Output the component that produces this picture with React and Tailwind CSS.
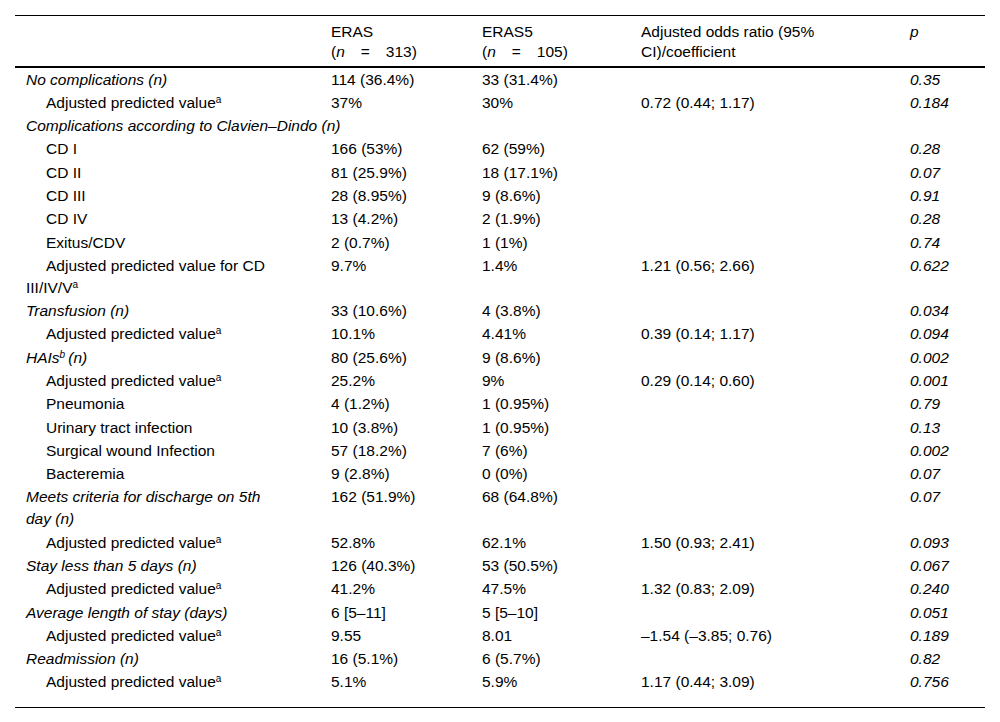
const rows = [
  { label: ['No complications (n)'], italic: true, a: '114 (36.4%)', b: '33 (31.4%)', c: '', p: '0.35' },
  { label: ['Adjusted predicted value'], sup: 'a', a: '37%', b: '30%', c: '0.72 (0.44; 1.17)', p: '0.184' },
  { section: 'Complications according to Clavien–Dindo (n)' },
  { label: ['CD I'], a: '166 (53%)', b: '62 (59%)', c: '', p: '0.28' },
  { label: ['CD II'], a: '81 (25.9%)', b: '18 (17.1%)', c: '', p: '0.07' },
  { label: ['CD III'], a: '28 (8.95%)', b: '9 (8.6%)', c: '', p: '0.91' },
  { label: ['CD IV'], a: '13 (4.2%)', b: '2 (1.9%)', c: '', p: '0.28' },
  { label: ['Exitus/CDV'], a: '2 (0.7%)', b: '1 (1%)', c: '', p: '0.74' },
  { label: ['Adjusted predicted value for CD', 'III/IV/V'], sup: 'a', a: '9.7%', b: '1.4%', c: '1.21 (0.56; 2.66)', p: '0.622' },
  { label: ['Transfusion (n)'], italic: true, a: '33 (10.6%)', b: '4 (3.8%)', c: '', p: '0.034' },
  { label: ['Adjusted predicted value'], sup: 'a', a: '10.1%', b: '4.41%', c: '0.39 (0.14; 1.17)', p: '0.094' },
  { hais: true, a: '80 (25.6%)', b: '9 (8.6%)', c: '', p: '0.002' },
  { label: ['Adjusted predicted value'], sup: 'a', a: '25.2%', b: '9%', c: '0.29 (0.14; 0.60)', p: '0.001' },
  { label: ['Pneumonia'], a: '4 (1.2%)', b: '1 (0.95%)', c: '', p: '0.79' },
  { label: ['Urinary tract infection'], a: '10 (3.8%)', b: '1 (0.95%)', c: '', p: '0.13' },
  { label: ['Surgical wound Infection'], a: '57 (18.2%)', b: '7 (6%)', c: '', p: '0.002' },
  { label: ['Bacteremia'], a: '9 (2.8%)', b: '0 (0%)', c: '', p: '0.07' },
  { label: ['Meets criteria for discharge on 5th', 'day (n)'], italic: true, a: '162 (51.9%)', b: '68 (64.8%)', c: '', p: '0.07' },
  { label: ['Adjusted predicted value'], sup: 'a', a: '52.8%', b: '62.1%', c: '1.50 (0.93; 2.41)', p: '0.093' },
  { label: ['Stay less than 5 days (n)'], italic: true, a: '126 (40.3%)', b: '53 (50.5%)', c: '', p: '0.067' },
  { label: ['Adjusted predicted value'], sup: 'a', a: '41.2%', b: '47.5%', c: '1.32 (0.83; 2.09)', p: '0.240' },
  { label: ['Average length of stay (days)'], italic: true, a: '6 [5–11]', b: '5 [5–10]', c: '', p: '0.051' },
  { label: ['Adjusted predicted value'], sup: 'a', a: '9.55', b: '8.01', c: '–1.54 (–3.85; 0.76)', p: '0.189' },
  { label: ['Readmission (n)'], italic: true, a: '16 (5.1%)', b: '6 (5.7%)', c: '', p: '0.82' },
  { label: ['Adjusted predicted value'], sup: 'a', a: '5.1%', b: '5.9%', c: '1.17 (0.44; 3.09)', p: '0.756' },
];

const cell = 'pl-[11px] pr-[11px] pt-[0.65px] pb-[0.65px] align-top';
const head = 'pl-[11px] pr-[11px] pt-[6px] pb-[4px] text-left align-top font-normal';

function Lines({ parts }) {
  return parts.map((part, i) => (
    <span key={i}>
      {i > 0 && <br />}
      {part}
    </span>
  ));
}

function Label({ row }) {
  if (row.hais) {
    return (
      <td className={`${cell} italic`}>
        HAIs<sup className="text-[10px]">b</sup>&thinsp;(n)
      </td>
    );
  }
  if (row.italic) {
    return (
      <td className={`${cell} italic`}>
        <Lines parts={row.label} />
      </td>
    );
  }
  return (
    <td className={`${cell} indent-[20px]`}>
      <Lines parts={row.label} />
      {row.sup && <sup className="text-[10px]">{row.sup}</sup>}
    </td>
  );
}

function NHead({ n }) {
  return (
    <>
      (<i>n</i>
      <span className="mx-[16px]">=</span>
      {n})
    </>
  );
}

export default function App() {
  return (
    <div className="min-h-screen bg-white px-[15px] pt-[15px] font-['Liberation_Sans',Arial,sans-serif] text-[15.5px] leading-[22px] text-black">
      <table className="w-[970px] table-fixed border-collapse">
        <colgroup>
          <col className="w-[305px]" />
          <col className="w-[151px]" />
          <col className="w-[159px]" />
          <col className="w-[269px]" />
          <col className="w-[86px]" />
        </colgroup>
        <thead>
          <tr className="border-t border-black border-b-2 leading-[20px]">
            <th className={head}></th>
            <th className={head}>
              ERAS
              <br />
              <NHead n="313" />
            </th>
            <th className={head}>
              ERAS5
              <br />
              <NHead n="105" />
            </th>
            <th className={head}>Adjusted odds ratio (95% CI)/coefficient</th>
            <th className={`${head} italic`}>p</th>
          </tr>
        </thead>
        <tbody className="border-b border-black">
          {rows.map((row, i) =>
            row.section ? (
              <tr key={i}>
                <td colSpan={5} className={`${cell} italic`}>
                  {row.section}
                </td>
              </tr>
            ) : (
              <tr key={i} className={i === rows.length - 1 ? '[&>td]:pb-[14px]' : ''}>
                <Label row={row} />
                <td className={cell}>{row.a}</td>
                <td className={cell}>{row.b}</td>
                <td className={cell}>{row.c}</td>
                <td className={`${cell} italic`}>{row.p}</td>
              </tr>
            )
          )}
        </tbody>
      </table>
    </div>
  );
}
